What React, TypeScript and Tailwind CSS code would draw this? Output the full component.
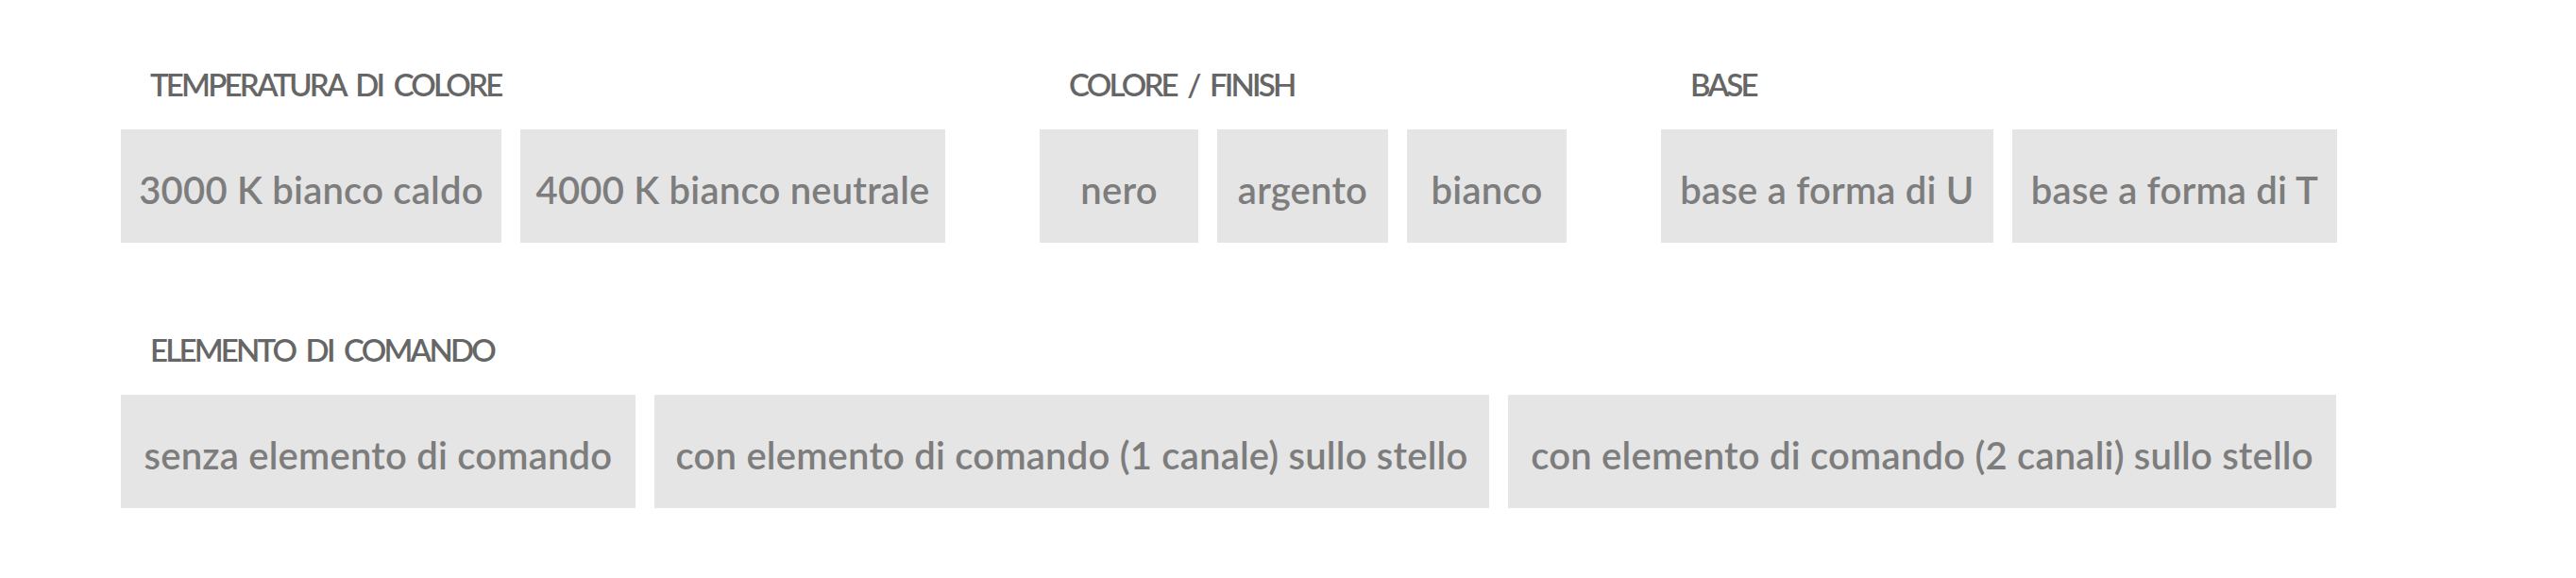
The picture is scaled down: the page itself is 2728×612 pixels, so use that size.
const groups1 = [
  {
    label: 'TEMPERATURA DI COLORE',
    options: [
      { text: '3000 K bianco caldo', w: 'w-[403px]' },
      { text: '4000 K bianco neutrale', w: 'w-[450px]' },
    ],
  },
  {
    label: 'COLORE / FINISH',
    options: [
      { text: 'nero', w: 'w-[168px]' },
      { text: 'argento', w: 'w-[181px]' },
      { text: 'bianco', w: 'w-[169px]' },
    ],
  },
  {
    label: 'BASE',
    options: [
      { text: 'base a forma di U', w: 'w-[352px]' },
      { text: 'base a forma di T', w: 'w-[344px]' },
    ],
  },
]

const group2 = {
  label: 'ELEMENTO DI COMANDO',
  options: [
    { text: 'senza elemento di comando', w: 'w-[545px]' },
    { text: 'con elemento di comando (1 canale) sullo stello', w: 'w-[884px]' },
    { text: 'con elemento di comando (2 canali) sullo stello', w: 'w-[877px]' },
  ],
}

interface Option {
  text: string
  w: string
}

function OptionGroup({ label, options }: { label: string; options: Option[] }) {
  return (
    <div className="flex flex-col">
      <div className="pl-[31px] h-[33px] text-[33px] leading-none font-semibold tracking-[-2.8px] [word-spacing:6px] text-[#666666] mb-[31px] whitespace-nowrap">
        {label}
      </div>
      <div className="flex gap-[20px]">
        {options.map((o) => (
          <button
            key={o.text}
            className={`${o.w} h-[120px] bg-[#e5e5e5] flex items-center justify-center pt-[8px] text-[40px] leading-none font-semibold tracking-[0.2px] text-[#7d7d7d] whitespace-nowrap`}
          >
            {o.text}
          </button>
        ))}
      </div>
    </div>
  )
}

export default function App() {
  return (
    <div
      className="w-[2728px] h-[612px] bg-white pl-[128px] pt-[73px]"
      style={{ fontFamily: 'Lato, "Liberation Sans", sans-serif' }}
    >
      <div className="flex gap-[100px]">
        {groups1.map((g) => (
          <OptionGroup key={g.label} label={g.label} options={g.options} />
        ))}
      </div>
      <div className="mt-[97px]">
        <OptionGroup label={group2.label} options={group2.options} />
      </div>
    </div>
  )
}
